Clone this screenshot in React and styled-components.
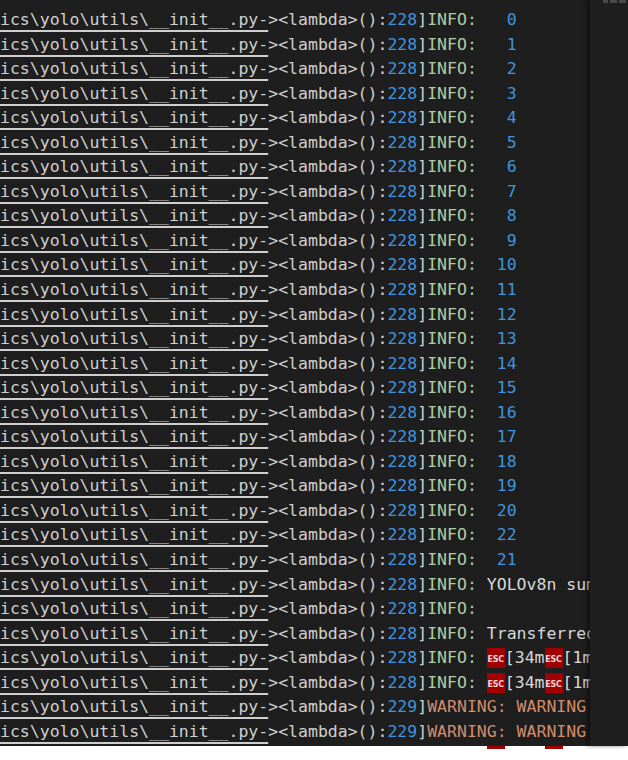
import React from "react";
import styled, { createGlobalStyle } from "styled-components";

const Global = createGlobalStyle`
  html, body { margin: 0; padding: 0; background: #ffffff; }
  #root { width: 628px; }
`;

const Frame = styled.div`
  width: 628px;
  height: 749px;
  overflow: hidden;
  background: #ffffff;
`;

const Screen = styled.div`
  display: flex;
  height: 746px;
  background: #1e1e1e;
`;

const Terminal = styled.div`
  flex: 1;
  min-width: 0;
  overflow-x: clip;
  overflow-y: visible;
  padding-top: 8px;
  font-family: "DejaVu Sans Mono", "Liberation Mono", monospace;
  font-size: 16.5px;
  color: #d0d0d0;
`;

const Line = styled.div`
  height: 24.55px;
  line-height: 24.55px;
  white-space: pre;
  color: ${(p) => (p.$ghost ? "transparent" : "inherit")};
  & > span { color: ${(p) => (p.$ghost ? "transparent" : undefined)}; }
`;

const Path = styled.span`
  text-decoration: underline;
  text-decoration-color: ${(p) => (p.$ghost ? "transparent" : "#cfcfcf")};
  text-decoration-thickness: 2px;
  text-decoration-skip-ink: none;
  text-underline-offset: 5px;
`;

const Tok = styled.span`
  color: ${(p) => (p.$ghost ? "transparent" : p.$c || "#d0d0d0")};
`;

const Esc = styled.span`
  display: inline-block;
  width: 18px;
  height: 20px;
  overflow: hidden;
  vertical-align: -5px;
  background: #a10000;
  color: #f3d6d6;
  font-family: "DejaVu Sans", sans-serif;
  font-size: 8px;
  font-weight: bold;
  line-height: 24px;
  text-align: center;
  letter-spacing: -0.2px;
`;

const Side = styled.div`
  width: 38px;
  flex: none;
  background: #1f1f1f;
  box-shadow: -3px 0 4px rgba(0, 0, 0, 0.45);
  display: flex;
  justify-content: flex-end;
  gap: 2px;
  padding-right: 2px;
  box-sizing: border-box;
`;

const Mark = styled.span`
  width: ${(p) => p.$w}px;
  height: 3px;
  background: #4a4a4a;
`;

const BLUE = "#3f95df";
const GREEN = "#b0cca2";
const ORANGE = "#d38d6e";
const WHITE = "#d8d8d8";

const rows = [];
for (let i = 0; i <= 20; i++) rows.push({ lvl: "INFO", num: i });
rows.push({ lvl: "INFO", num: 22 });
rows.push({ lvl: "INFO", num: 21 });
rows.push({ lvl: "INFO", text: " YOLOv8n summary (fused): 168 layers" });
rows.push({ lvl: "INFO", text: "" });
rows.push({ lvl: "INFO", text: " Transferred 355/355 items from pretrained weights" });
rows.push({ lvl: "INFO", esc: true });
rows.push({ lvl: "INFO", esc: true });
rows.push({ lvl: "WARNING", text: " WARNING ⚠️ no labels found" });
rows.push({ lvl: "WARNING", text: " WARNING ⚠️ no labels found" });
rows.push({ lvl: "INFO", esc: true, ghost: true });

function Message({ r }) {
  const g = r.ghost;
  if (r.num !== undefined) {
    return <Tok $c={BLUE}>{" " + String(r.num).padStart(3, " ")}</Tok>;
  }
  if (r.esc) {
    return (
      <>
        <Tok $ghost={g}> </Tok>
        <Esc>ESC</Esc>
        <Tok $ghost={g} $c={WHITE}>[34m</Tok>
        <Esc>ESC</Esc>
        <Tok $ghost={g} $c={WHITE}>[1mtrain: </Tok>
      </>
    );
  }
  return <Tok $c={r.lvl === "WARNING" ? ORANGE : WHITE}>{r.text}</Tok>;
}

export default function App() {
  return (
    <>
      <Global />
      <Frame>
        <Screen>
          <Terminal>
            {rows.map((r, i) => {
              const g = r.ghost;
              const warn = r.lvl === "WARNING";
              return (
                <Line key={i}>
                  <Path $ghost={g}>{"ics\\yolo\\utils\\__init__.py-"}</Path>
                  <Tok $ghost={g}>{"><lambda>():"}</Tok>
                  <Tok $ghost={g} $c={BLUE}>{warn ? "229" : "228"}</Tok>
                  <Tok $ghost={g}>]</Tok>
                  <Tok $ghost={g} $c={warn ? ORANGE : GREEN}>{r.lvl + ":"}</Tok>
                  <Message r={r} />
                </Line>
              );
            })}
          </Terminal>
          <Side>
            <Mark $w={5} />
            <Mark $w={7} />
            <Mark $w={7} />
          </Side>
        </Screen>
      </Frame>
    </>
  );
}
